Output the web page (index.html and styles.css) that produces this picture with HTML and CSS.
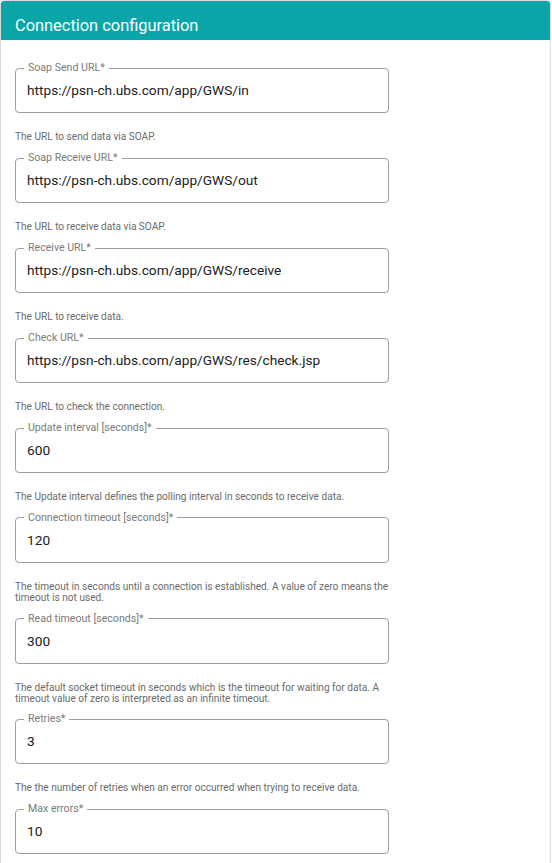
FILE: index.html
```html
<!DOCTYPE html>
<html lang="en">
<head>
<meta charset="utf-8">
<title>Connection configuration</title>
<link rel="stylesheet" href="styles.css">
</head>
<body>
<section class="card">
  <header class="card-header">
    <h1 class="card-title">Connection configuration</h1>
  </header>
  <div class="card-body">
    <div class="field">
      <fieldset class="outline">
        <legend class="label">Soap Send URL*</legend>
        <div class="value">https://psn-ch.ubs.com/app/GWS/in</div>
      </fieldset>
      <p class="helper">The URL to send data via SOAP.</p>
    </div>
    <div class="field">
      <fieldset class="outline">
        <legend class="label">Soap Receive URL*</legend>
        <div class="value">https://psn-ch.ubs.com/app/GWS/out</div>
      </fieldset>
      <p class="helper">The URL to receive data via SOAP.</p>
    </div>
    <div class="field">
      <fieldset class="outline">
        <legend class="label">Receive URL*</legend>
        <div class="value">https://psn-ch.ubs.com/app/GWS/receive</div>
      </fieldset>
      <p class="helper">The URL to receive data.</p>
    </div>
    <div class="field">
      <fieldset class="outline">
        <legend class="label">Check URL*</legend>
        <div class="value">https://psn-ch.ubs.com/app/GWS/res/check.jsp</div>
      </fieldset>
      <p class="helper">The URL to check the connection.</p>
    </div>
    <div class="field">
      <fieldset class="outline">
        <legend class="label">Update interval [seconds]*</legend>
        <div class="value">600</div>
      </fieldset>
      <p class="helper">The Update interval defines the polling interval in seconds to receive data.</p>
    </div>
    <div class="field">
      <fieldset class="outline">
        <legend class="label">Connection timeout [seconds]*</legend>
        <div class="value">120</div>
      </fieldset>
      <p class="helper">The timeout in seconds until a connection is established. A value of zero means the timeout is not used.</p>
    </div>
    <div class="field">
      <fieldset class="outline">
        <legend class="label">Read timeout [seconds]*</legend>
        <div class="value">300</div>
      </fieldset>
      <p class="helper">The default socket timeout in seconds which is the timeout for waiting for data. A timeout value of zero is interpreted as an infinite timeout.</p>
    </div>
    <div class="field">
      <fieldset class="outline">
        <legend class="label">Retries*</legend>
        <div class="value">3</div>
      </fieldset>
      <p class="helper">The the number of retries when an error occurred when trying to receive data.</p>
    </div>
    <div class="field">
      <fieldset class="outline">
        <legend class="label">Max errors*</legend>
        <div class="value">10</div>
      </fieldset>
    </div>
  </div>
</section>
</body>
</html>
```
FILE: styles.css
```css
html, body {
  margin: 0;
  padding: 0;
  background: #ffffff;
}

body {
  font-family: Roboto, "Liberation Sans", Arial, sans-serif;
  color: #212121;
}

.card {
  width: 551px;
  box-sizing: border-box;
  border: 1px solid #dcdcdc;
  border-radius: 4px;
  background: #ffffff;
}

.card-header {
  background: #09a5a8;
  height: 39px;
  display: flex;
  align-items: center;
  padding: 0 14px;
  border-radius: 3px 3px 0 0;
}

.card-title {
  margin: 0;
  font-size: 16.4px;
  font-weight: 400;
  color: #ffffff;
  line-height: 20px;
  padding-top: 11px;
}

.card-body {
  padding: 22px 14px 40px 14px;
  display: flex;
  flex-direction: column;
  gap: 10px;
}

.field {
  width: 374px;
}

.field:nth-child(n+6) {
  margin-top: -0.25px;
}

.outline {
  margin: 0;
  padding: 0;
  border: 1px solid #9e9e9e;
  border-radius: 4px;
  min-width: 0;
}

.label {
  margin-left: 8px;
  padding: 0 4px;
  font-size: 10.6px;
  line-height: 12px;
  color: #7a7a7a;
}

.value {
  height: 38px;
  box-sizing: border-box;
  padding: 8px 11px 0 11px;
  font-size: 13.7px;
  line-height: 16px;
  color: #212121;
}

.helper {
  margin: 18px 0 0 0;
  font-size: 10.1px;
  line-height: 11px;
  color: #6b6b6b;
}
```
